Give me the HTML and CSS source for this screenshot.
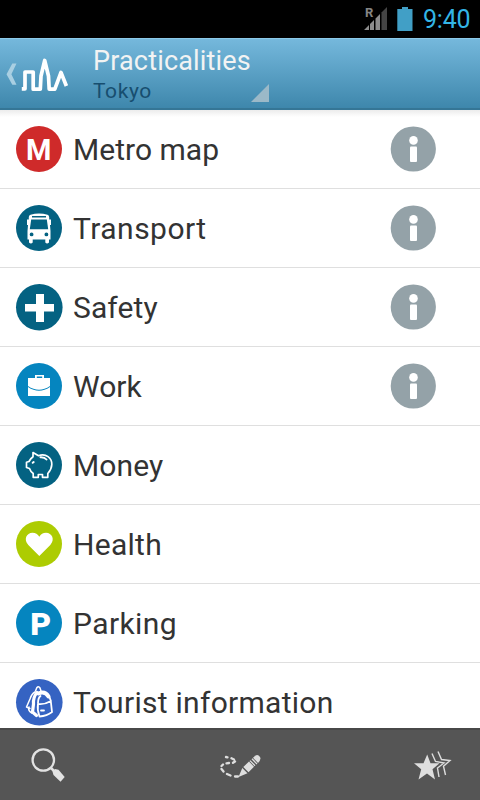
FILE: index.html
```html
<!DOCTYPE html>
<html lang="en">
<head>
<meta charset="utf-8">
<title>Practicalities</title>
<link rel="stylesheet" href="styles.css">
</head>
<body>
<div class="screen">
  <div class="status">
    <svg class="signal" width="26" height="26" viewBox="0 0 26 26">
      <text class="roam" x="1" y="11">R</text>
      <path fill="#8d8d8d" d="M0 24L5 19V24ZM6 18L10 14V24H6ZM11.500 12.500L16 8V24H11.500Z"/>
      <path fill="#444" d="M17.500 6.500L23 1V24H17.500Z"/>
    </svg>
    <svg class="battery" width="16" height="24" viewBox="0 0 16 24"><path fill="#419fc6" d="M5 0H11V2H15.500V24H.3V2H5Z"/></svg>
    <span class="clock">9:40</span>
  </div>
  <header class="bar">
    <svg class="home" width="70" height="70" viewBox="0 39 70 70">
      <path fill="#a9cfe2" d="M12.300 63.500H16.500L11.400 74.200L16.500 84.700H12.300L6.500 74.200Z"/>
      <path fill="none" stroke="#fff" stroke-width="3.700" stroke-linejoin="round" d="M21.800 88.800H25V72H33.200V89.200H40.300L41 76L44.700 60.500L48.500 76L49.200 89.200H54.800L61 72.500L66.400 86"/>
    </svg>
    <div class="titles">
      <span class="title">Practicalities</span>
      <span class="city">Tokyo</span>
      <svg class="spin" width="18" height="18" viewBox="0 0 18 18"><path fill="#9bb9c8" d="M18 0V18H0Z"/></svg>
    </div>
  </header>
  <main class="list">
    <div class="row">
      <svg class="icon" viewBox="0 0 46 46"><circle cx="23" cy="23" r="23" fill="#cf2a2a"/><text class="metro" x="22.800" y="33.500">M</text></svg>
      <span class="label l1">Metro map</span>
      <svg class="info" viewBox="0 0 46 46"><use href="#info"/></svg>
    </div>
    <div class="row">
      <svg class="icon" viewBox="0 0 46 46"><circle cx="23" cy="23" r="23" fill="#046282"/>
        <path fill="#fff" fill-rule="evenodd" d="M14.500 9.800Q23 7.300 31.500 9.800Q33 10.300 33.200 12V14.500H35V20H34L34.500 26V34.500H33V37.500Q31 39.500 29.300 37.500V34.500H16.700V37.500Q15 39.500 13 37.500V34.500H11.500V26L12 20H11V14.500H12.800V12Q13 10.300 14.500 9.800ZM16 11V12.600H30V11ZM15.200 14.500L13.800 24.200H32.200L30.800 14.500ZM15.600 27.500A1.900 1.900 0 1 0 15.600 31.300A1.900 1.900 0 1 0 15.600 27.500ZM30.400 27.500A1.900 1.900 0 1 0 30.400 31.300A1.900 1.900 0 1 0 30.400 27.500Z"/></svg>
      <span class="label l2">Transport</span>
      <svg class="info" viewBox="0 0 46 46"><use href="#info"/></svg>
    </div>
    <div class="row">
      <svg class="icon" viewBox="0 0 46 46"><circle cx="23.300" cy="23.300" r="23.300" fill="#046282"/><path fill="#fff" d="M20 10H28V20H38V27.500H28V38H20V27.500H9V20H20Z"/></svg>
      <span class="label l3">Safety</span>
      <svg class="info" viewBox="0 0 46 46"><use href="#info"/></svg>
    </div>
    <div class="row">
      <svg class="icon" viewBox="0 0 46 46"><circle cx="23" cy="23" r="23" fill="#0585bf"/><path fill="#fff" fill-rule="evenodd" d="M19 15V12H28V15H34V23Q23 30.500 12 23V15ZM20.800 15H26.200V13.600H20.800Z"/><path fill="#fff" d="M12 24Q23 31.500 34 24V33H12Z"/></svg>
      <span class="label l4">Work</span>
      <svg class="info" viewBox="0 0 46 46"><use href="#info"/></svg>
    </div>
    <div class="row">
      <svg class="icon" viewBox="0 0 46 46"><circle cx="23" cy="23" r="23" fill="#046282"/>
        <path fill="none" stroke="#fff" stroke-width="1.700" stroke-linejoin="round" d="M17 10.500L22.500 13.700C30 11 36 16 35.800 22.500C35.700 27 34 29 31.800 31.500V35.300H26.500V32.500H22.300V35.300H17.200V31.500Q14.500 29.500 13.500 26.500L10.500 25.500V20.300L13 19.500Q14.500 16.500 17 14.800Z"/>
        <path fill="none" stroke="#fff" stroke-width="2" stroke-linecap="round" d="M24.500 15.200Q28.500 15 30.500 17.500M16.700 20.800L17.700 20"/></svg>
      <span class="label l5">Money</span>
    </div>
    <div class="row">
      <svg class="icon" viewBox="0 0 46 46"><circle cx="23" cy="23" r="23" fill="#adcc02"/><path fill="#fff" d="M23.300 35L12.300 24C7.300 18.500 10.500 11.800 16.500 11.800Q21 11.800 23.300 15.800Q25.500 11.800 30 11.800C36 11.800 39.300 18.500 34.300 24Z"/></svg>
      <span class="label l6">Health</span>
    </div>
    <div class="row">
      <svg class="icon" viewBox="0 0 46 46"><circle cx="23" cy="23" r="23" fill="#0585bf"/><text class="park" x="24.600" y="35">P</text></svg>
      <span class="label l7">Parking</span>
    </div>
    <div class="row">
      <svg class="icon" viewBox="0 0 46 46"><circle cx="23.300" cy="23.300" r="23.300" fill="#3563c2"/>
        <g fill="none" stroke="#fff" stroke-linecap="round" stroke-linejoin="round">
          <path stroke-width="1.500" d="M19.500 12L20.800 8.800Q22.500 6.500 24 9L25 12M19 13Q15.500 15 14 20L10.500 28L14 29.500M13 28Q11.500 31 15.500 34"/>
          <path stroke-width="3.200" d="M21 13.500Q17 18 17.500 25L16.500 33L20.500 36.500"/>
          <path stroke-width="1.800" d="M31 15Q34.500 18 35 24L36 33Q31 37 23.500 37.500Q21 31 22 25Q28 26 35 22M22 24Q22 19 24.500 17M25 31.500H28"/>
          <path stroke-width="4" d="M22.500 14.500Q29 11.500 32.500 17.500"/>
        </g></svg>
      <span class="label l8">Tourist information</span>
    </div>
  </main>
  <footer class="tools">
    <svg width="40" height="40" viewBox="28 744 40 40"><circle cx="43.300" cy="759" r="10.700" fill="none" stroke="#e2e2e2" stroke-width="2.300"/><path stroke="#e2e2e2" stroke-width="2.500" d="M50.500 766.500L54 770"/><path fill="#e2e2e2" d="M52.500 770.500L55 768L58.500 768.700L64.700 776L60.500 780.700L53.500 774Z"/></svg>
    <svg width="46" height="40" viewBox="217 744 46 40"><path fill="none" stroke="#dedede" stroke-width="2.300" stroke-linecap="round" d="M226 756L227.500 756.300M231.500 757.300L234 758.500M235 760.500L233 761.800M229 762L226.500 762.300M223 763.500L221.500 765M221.500 768L223.500 770.500M227 773L230.500 774.500M235 775.500H238"/><path fill="#dedede" d="M238.500 776L242.300 767L247.500 772.200ZM243.300 766L249 760.500L254 765.800L248.500 771.200Z"/><path stroke="#dedede" stroke-width="1.300" d="M250 759.600L255 764.800M252 757.800L257 763"/><path fill="#dedede" d="M253 756.800L255.500 754.500Q258 753 260 756Q261.500 758.500 258 762Z"/></svg>
    <svg width="40" height="40" viewBox="412 744 40 40"><path fill="#dedede" d="M427.200 753.500L430.500 762.300H439.500L432.500 768.200L435 778.500L427 772.500L418.500 778.500L421.200 768.200L414 762.300H423.500Z"/><path fill="none" stroke="#dedede" stroke-width="1.400" d="M432 752.500L435.500 760.500L444 762L437.500 767L439 776M438 750.500L441.500 758.500L450 759.500L443.500 765.200L445.500 774"/></svg>
  </footer>
</div>
<svg class="defs" width="0" height="0"><symbol id="info" viewBox="0 0 46 46"><circle cx="23.300" cy="23" r="22.600" fill="#94a2a8"/><circle cx="23.500" cy="14.400" r="4.300" fill="#fff"/><rect x="20" y="20.500" width="7" height="15.500" rx="1" fill="#fff"/></symbol></svg>
</body>
</html>
```
FILE: styles.css
```css
body { margin: 0; font-family: Roboto, sans-serif; background: #fff; }
svg { display: block; flex: none; }
.defs { position: absolute; }
.screen { width: 480px; height: 800px; display: flex; flex-direction: column; overflow: hidden; }
.status { height: 38px; flex: none; background: #000; display: flex; align-items: center; justify-content: flex-end; padding-right: 10px; box-sizing: border-box; }
.signal { margin: 0 7px 1px 0; }
.roam { font: bold 13px Roboto, sans-serif; fill: #858585; }
.battery { margin: 0 10px 1px 0; }
.clock { font-size: 25px; line-height: 38px; padding-top: 2px; color: #33b5e5; width: 47px; white-space: nowrap; letter-spacing: -0.2px; }
.bar { height: 72px; flex: none; box-sizing: border-box; display: flex; background: linear-gradient(#75b8dc, #3e87ac); border-top: 1px solid #8cc9e8; border-bottom: 2px solid #357696; }
.titles { width: 176px; margin-left: 23px; display: grid; grid-template-columns: 1fr 18px; grid-template-rows: 41px 28px; }
.title { grid-column: 1 / 3; font-size: 27px; line-height: 44px; letter-spacing: 0.17px; color: #f2f3f3; white-space: nowrap; }
.city { font-size: 21px; line-height: 23px; letter-spacing: 0.6px; color: #174e6f; }
.spin { margin-top: 4px; }
.list { flex: 1; min-height: 0; overflow: hidden; background: linear-gradient(#ececec, #fff 7px); }
.row { height: 79px; box-sizing: border-box; border-bottom: 1px solid #dfdfdf; padding: 0 44px 0 16px; display: flex; align-items: center; }
.icon { width: 46px; height: 46px; overflow: visible; }
.info { width: 46px; height: 46px; }
.label { flex: 1; margin-left: 11px; padding-top: 2px; font-size: 30px; line-height: 40px; color: #333; white-space: nowrap; letter-spacing: 0.3px; }
.l1 { letter-spacing: 0.03px; }
.l2 { letter-spacing: 0.47px; }
.l3 { letter-spacing: 0.1px; }
.l4 { letter-spacing: 0; }
.l5 { letter-spacing: 0.1px; }
.l7 { letter-spacing: 0.4px; }
.l8 { letter-spacing: 0.28px; }
.metro { font: bold 29px Roboto, sans-serif; fill: #fff; text-anchor: middle; }
.park { font: 900 32px Roboto, sans-serif; fill: #fff; text-anchor: middle; }
.tools { height: 72px; flex: none; box-sizing: border-box; border-top: 2px solid #484848; background: #555; display: flex; align-items: center; justify-content: space-between; padding: 0 28px; }
```
